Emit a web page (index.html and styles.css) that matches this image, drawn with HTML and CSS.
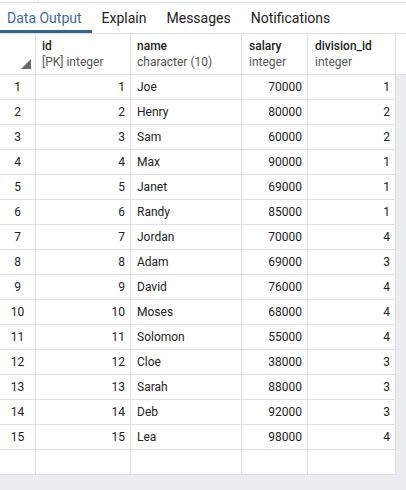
FILE: index.html
```html
<!DOCTYPE html>
<html>
<head>
<meta charset="utf-8">
<link rel="stylesheet" href="styles.css">
</head>
<body>
<div class="topline"><span class="topline-tick"></span></div>
<div class="tabs">
  <div class="tab active">Data Output</div>
  <div class="tab">Explain</div>
  <div class="tab">Messages</div>
  <div class="tab">Notifications</div>
</div>
<div class="grid-head">
  <div class="hcell corner"><svg class="corner-tri" width="10" height="10" viewBox="0 0 10 10"><polygon points="10,0 10,10 0,10" fill="#6b6b6b"/></svg></div>
  <div class="hcell c-id"><span class="hname">id</span><span class="htype">[PK] integer</span></div>
  <div class="hcell c-name"><span class="hname">name</span><span class="htype">character (10)</span></div>
  <div class="hcell c-sal"><span class="hname">salary</span><span class="htype">integer</span></div>
  <div class="hcell c-div"><span class="hname">division_id</span><span class="htype">integer</span></div>
  <div class="hfill"></div>
</div>
<div class="grid-body">
  <div class="row"><div class="cell c-num">1</div><div class="cell c-id r">1</div><div class="cell c-name">Joe</div><div class="cell c-sal r">70000</div><div class="cell c-div r">1</div></div>
  <div class="row"><div class="cell c-num">2</div><div class="cell c-id r">2</div><div class="cell c-name">Henry</div><div class="cell c-sal r">80000</div><div class="cell c-div r">2</div></div>
  <div class="row"><div class="cell c-num">3</div><div class="cell c-id r">3</div><div class="cell c-name">Sam</div><div class="cell c-sal r">60000</div><div class="cell c-div r">2</div></div>
  <div class="row"><div class="cell c-num">4</div><div class="cell c-id r">4</div><div class="cell c-name">Max</div><div class="cell c-sal r">90000</div><div class="cell c-div r">1</div></div>
  <div class="row"><div class="cell c-num">5</div><div class="cell c-id r">5</div><div class="cell c-name">Janet</div><div class="cell c-sal r">69000</div><div class="cell c-div r">1</div></div>
  <div class="row"><div class="cell c-num">6</div><div class="cell c-id r">6</div><div class="cell c-name">Randy</div><div class="cell c-sal r">85000</div><div class="cell c-div r">1</div></div>
  <div class="row"><div class="cell c-num">7</div><div class="cell c-id r">7</div><div class="cell c-name">Jordan</div><div class="cell c-sal r">70000</div><div class="cell c-div r">4</div></div>
  <div class="row"><div class="cell c-num">8</div><div class="cell c-id r">8</div><div class="cell c-name">Adam</div><div class="cell c-sal r">69000</div><div class="cell c-div r">3</div></div>
  <div class="row"><div class="cell c-num">9</div><div class="cell c-id r">9</div><div class="cell c-name">David</div><div class="cell c-sal r">76000</div><div class="cell c-div r">4</div></div>
  <div class="row"><div class="cell c-num">10</div><div class="cell c-id r">10</div><div class="cell c-name">Moses</div><div class="cell c-sal r">68000</div><div class="cell c-div r">4</div></div>
  <div class="row"><div class="cell c-num">11</div><div class="cell c-id r">11</div><div class="cell c-name">Solomon</div><div class="cell c-sal r">55000</div><div class="cell c-div r">4</div></div>
  <div class="row"><div class="cell c-num">12</div><div class="cell c-id r">12</div><div class="cell c-name">Cloe</div><div class="cell c-sal r">38000</div><div class="cell c-div r">3</div></div>
  <div class="row"><div class="cell c-num">13</div><div class="cell c-id r">13</div><div class="cell c-name">Sarah</div><div class="cell c-sal r">88000</div><div class="cell c-div r">3</div></div>
  <div class="row"><div class="cell c-num">14</div><div class="cell c-id r">14</div><div class="cell c-name">Deb</div><div class="cell c-sal r">92000</div><div class="cell c-div r">3</div></div>
  <div class="row"><div class="cell c-num">15</div><div class="cell c-id r">15</div><div class="cell c-name">Lea</div><div class="cell c-sal r">98000</div><div class="cell c-div r">4</div></div>
  <div class="row"><div class="cell c-num"></div><div class="cell c-id r"></div><div class="cell c-name"></div><div class="cell c-sal r"></div><div class="cell c-div r"></div></div>
</div>
</body>
</html>
```
FILE: styles.css
```css
* { box-sizing: border-box; }
html, body {
  margin: 0;
  padding: 0;
  height: 100%;
}
body {
  font-family: Roboto, "Liberation Sans", sans-serif;
  color: #222222;
  background: #eaedf1;
  overflow: hidden;
}
.topline {
  height: 3px;
  background: #ffffff;
  border-bottom: 1px solid #dde0e6;
  position: relative;
}
.topline-tick {
  position: absolute;
  left: 38px;
  top: 0;
  width: 1px;
  height: 2px;
  background: #dde0e6;
}
.tabs {
  display: flex;
  height: 31px;
  background: #ffffff;
  border-bottom: 1px solid #dde0e6;
}
.tab {
  font-size: 14px;
  line-height: 30px;
  padding: 0 10px;
  color: #222222;
}
.tab.active {
  color: #3b6d99;
  box-shadow: inset 0 -3px 0 #326690;
  padding: 0 10px 0 7px;
}
.grid-head {
  display: flex;
  height: 41px;
  background: #ffffff;
  border-bottom: 1px solid #dde0e6;
}
.hcell {
  display: flex;
  flex-direction: column;
  padding: 5px 7px 0 6px;
  border-right: 1px solid #dde0e6;
  font-size: 12px;
}
.hcell.corner {
  justify-content: flex-end;
  align-items: flex-end;
  padding: 0 4px 5px 0;
}
.hname {
  font-weight: 500;
  color: #222222;
  line-height: 15px;
}
.htype {
  color: #555555;
  line-height: 16px;
}
.hfill { flex: 1; }
.corner, .c-num { width: 36px; }
.c-id { width: 95px; }
.c-name { width: 111px; }
.c-sal { width: 66px; }
.c-div { width: 88px; }
.hcell.c-name { padding-left: 6px; }
.hcell.c-sal, .hcell.c-div { padding-left: 7px; }
.grid-body {
  width: 396px;
}
.row {
  display: flex;
  height: 25px;
  background: #ffffff;
  border-bottom: 1px solid #dde0e6;
}
.cell {
  font-size: 12px;
  line-height: 24px;
  border-right: 1px solid #dde0e6;
  padding: 0 6px;
  white-space: nowrap;
}
.cell.c-num { text-align: center; padding: 0; }
.cell.r { text-align: right; padding-right: 5px; }
```
